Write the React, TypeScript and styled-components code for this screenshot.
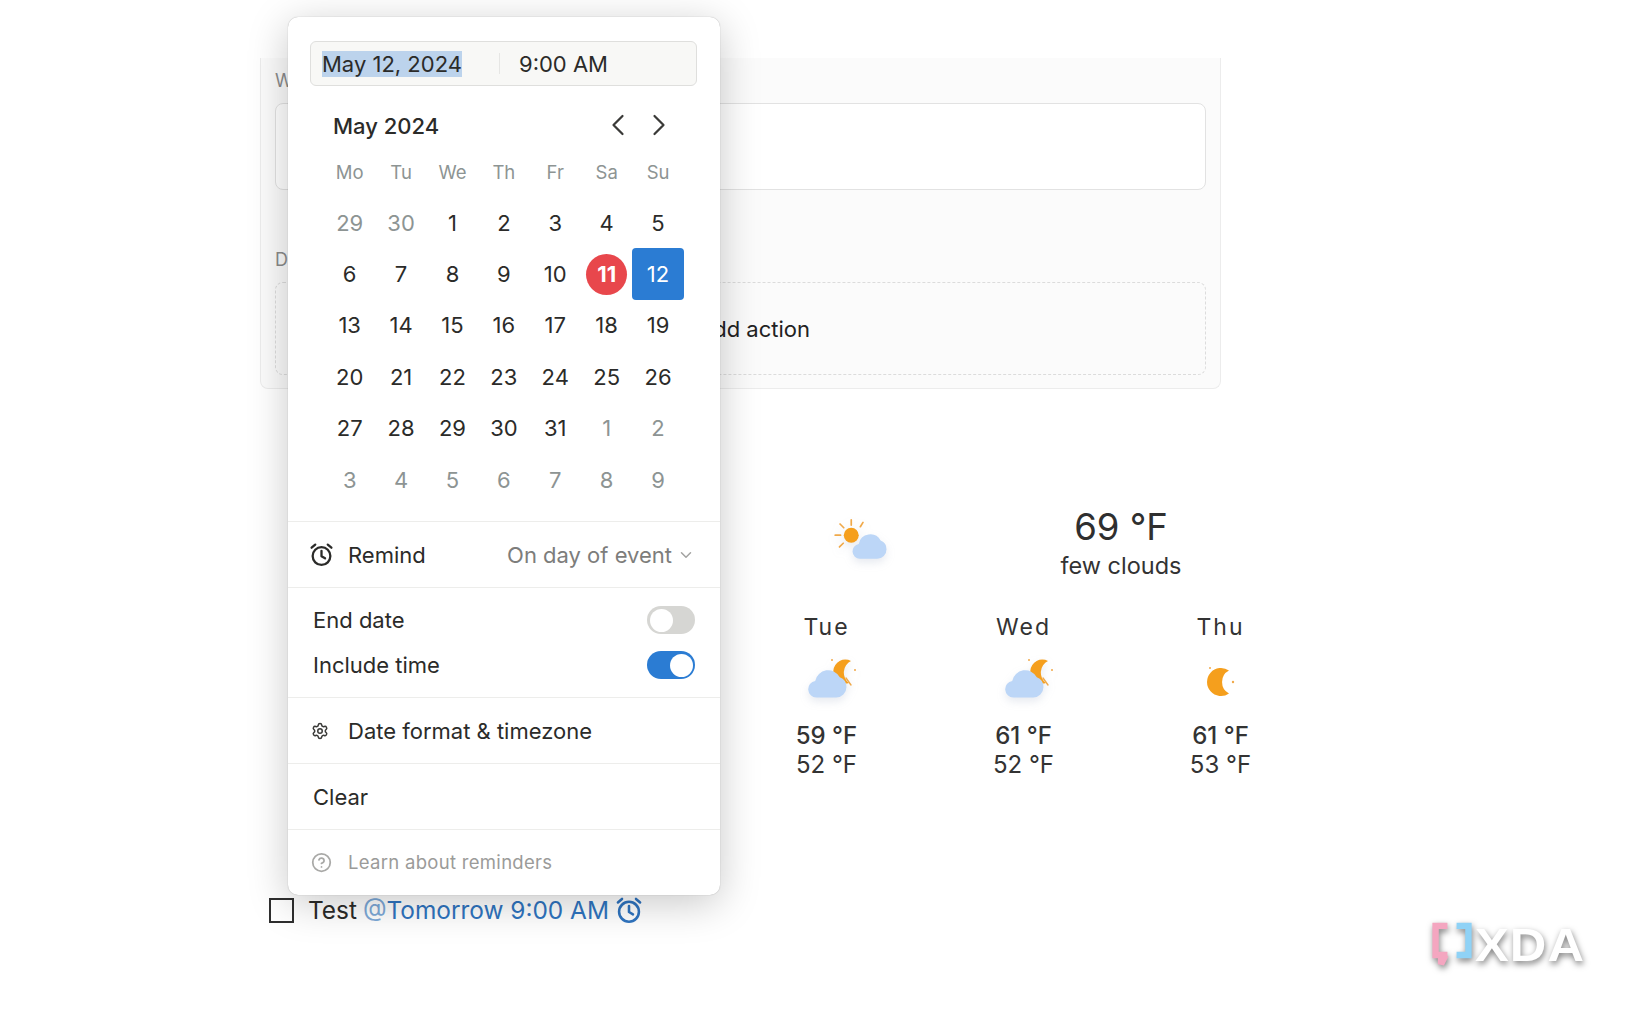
import React from 'react';
import styled, { createGlobalStyle } from 'styled-components';
import { ChevronLeft, ChevronRight, ChevronDown, Settings, CircleHelp, Plus } from 'lucide-react';

const GlobalStyle = createGlobalStyle`
  html, body { margin: 0; padding: 0; background: #fff; }
  body { font-family: Inter, "Noto Sans", sans-serif; color: #2b2b29; }
`;

const Page = styled.div`
  position: relative;
  width: 1650px;
  height: 1036px;
  overflow: hidden;
  box-sizing: border-box;
  padding: 58px 0 0 260px;
`;

/* background form, mostly hidden by the popup */
const Card = styled.section`
  box-sizing: border-box;
  width: 961px;
  height: 331px;
  padding: 12px 14px 0;
  background: #fbfbfb;
  border: 1px solid #ececec;
  border-top: none;
  border-radius: 0 0 8px 8px;
`;

const FieldLabel = styled.div`
  height: 22px;
  font-size: 18px;
  line-height: 22px;
  color: #8b8b8b;
  margin-bottom: 11px;
`;

const TextArea = styled.div`
  box-sizing: border-box;
  height: 87px;
  background: #fff;
  border: 1px solid #e2e2e2;
  border-radius: 8px;
  margin-bottom: 59px;
`;

const DropZone = styled.div`
  box-sizing: border-box;
  height: 93px;
  display: flex;
  align-items: center;
  justify-content: center;
  gap: 12px;
  padding-right: 5px;
  border: 1px dashed #dcdcdc;
  border-radius: 8px;
  font-size: 22px;
  color: #222;
`;

const Weather = styled.section`
  margin: 118px 0 0 468px;
  width: 591px;
`;

const CurrentRow = styled.div`
  display: flex;
  align-items: center;
  height: 70px;
`;

const CurrentIcon = styled.div`
  width: 60px;
  margin-left: 105px;
  margin-top: -6px;
  display: flex;
  justify-content: center;
`;

const CurrentText = styled.div`
  width: 200px;
  margin-left: 128px;
  text-align: center;
`;

const BigTemp = styled.div`
  font-size: 36.5px;
  line-height: 44px;
  margin-bottom: 3px;
  color: #2f2f2f;
`;

const Summary = styled.div`
  font-size: 23.5px;
  line-height: 28px;
  color: #333;
`;

const Forecast = styled.div`
  display: grid;
  grid-template-columns: repeat(3, 197px);
  margin-top: 36px;
`;

const Day = styled.div`
  display: flex;
  flex-direction: column;
  align-items: center;
`;

const DayName = styled.div`
  font-size: 23px;
  line-height: 28px;
  letter-spacing: 2px;
  color: #333;
`;

const DayIcon = styled.div`
  height: 54px;
  margin: 10px 0 16px;
  display: flex;
  align-items: center;
  justify-content: center;
`;

const Temp = styled.div<{ $high?: boolean }>`
  font-size: 24px;
  line-height: 29px;
  font-weight: ${p => (p.$high ? 500 : 400)};
  color: #333;
`;

const Task = styled.div`
  position: absolute;
  left: 269px;
  top: 897px;
  display: flex;
  align-items: center;
  height: 26px;
  font-size: 24.4px;
  white-space: nowrap;
`;

const Check = styled.span`
  box-sizing: border-box;
  width: 25px;
  height: 25px;
  border: 2px solid #2f2f2f;
  margin-right: 14px;
`;

const Mention = styled.span`
  margin-left: 6px;
  color: #2f74c0;
  display: inline-flex;
  align-items: center;
  gap: 6px;
`;

const At = styled.span`
  color: #7da9d8;
`;

/* date picker popup, floats above the page */
const Popup = styled.div`
  position: absolute;
  left: 288px;
  top: 17px;
  width: 432px;
  height: 878px;
  background: #fff;
  border-radius: 10px;
  box-shadow: 0 0 1px rgba(0, 0, 0, 0.35), 0 8px 40px rgba(0, 0, 0, 0.22);
  display: flex;
  flex-direction: column;
  font-size: 22px;
`;

const DateInput = styled.div`
  box-sizing: border-box;
  margin: 24px 23px 0 22px;
  height: 45px;
  display: flex;
  align-items: center;
  padding-left: 11px;
  background: #f8f8f6;
  border: 1px solid #dfdfdd;
  border-radius: 6px;
`;

const DateValue = styled.span`
  width: 177px;
  display: block;
`;

const Selected = styled.span`
  background: #bcd3ec;
`;

const InputDivider = styled.span`
  width: 1px;
  height: 21px;
  background: #e6e6e4;
  margin-right: 19px;
`;

const MonthRow = styled.div`
  display: flex;
  align-items: center;
  justify-content: space-between;
  margin: 18px 43px 5px 45px;
  height: 44px;
  font-weight: 500;
`;

const NavButtons = styled.div`
  display: flex;
  gap: 5px;
  margin-top: -3px;
  color: #3a3a38;
`;

const CalendarGrid = styled.div`
  display: grid;
  grid-template-columns: repeat(7, 51.4px);
  margin: 0 0 0 36px;
`;

const WeekDay = styled.div`
  height: 37px;
  display: flex;
  align-items: center;
  justify-content: center;
  font-size: 18.5px;
  color: #8d9493;
  margin-bottom: 7px;
`;

const DayCell = styled.div<{ $muted?: boolean; $picked?: boolean }>`
  height: 51.4px;
  display: flex;
  align-items: center;
  justify-content: center;
  font-size: 22px;
  color: ${p => (p.$picked ? '#fff' : p.$muted ? '#8d9493' : '#2b2b29')};
  background: ${p => (p.$picked ? '#2b7cd3' : 'transparent')};
  border-radius: ${p => (p.$picked ? '4px' : '0')};
`;

const TodayMark = styled.span`
  width: 41px;
  height: 41px;
  border-radius: 50%;
  background: #e8474c;
  color: #fff;
  font-weight: 700;
  display: flex;
  align-items: center;
  justify-content: center;
`;

const Section = styled.div<{ $h: number; $gap?: number }>`
  box-sizing: border-box;
  height: ${p => p.$h}px;
  margin-top: ${p => p.$gap ?? 0}px;
  border-top: 1.5px solid #ededeb;
  padding: 0 25px;
  display: flex;
  align-items: center;
`;

const ToggleSection = styled(Section)`
  flex-direction: column;
  align-items: stretch;
  justify-content: center;
`;

const IconSlot = styled.span<{ $shift?: number }>`
  width: 37px;
  margin-left: ${p => p.$shift ?? -2}px;
  display: flex;
  align-items: center;
`;

const RemindLabel = styled.span`
  margin-left: 2px;
`;

const RemindValue = styled.span`
  margin-left: auto;
  color: #7d7d7b;
  display: flex;
  align-items: center;
  gap: 5px;
`;

const ToggleRow = styled.div`
  height: 45px;
  display: flex;
  align-items: center;
  justify-content: space-between;
`;

const Toggle = styled.span<{ $on?: boolean }>`
  box-sizing: border-box;
  width: 48px;
  height: 28px;
  border-radius: 14px;
  padding: 2.5px;
  display: flex;
  justify-content: ${p => (p.$on ? 'flex-end' : 'flex-start')};
  background: ${p => (p.$on ? '#2b7cd3' : '#d6d6d3')};
`;

const Knob = styled.span`
  width: 23px;
  height: 23px;
  border-radius: 50%;
  background: #fff;
`;

const LearnText = styled.span`
  font-size: 18.5px;
  color: #9b9b99;
  letter-spacing: 0.3px;
`;

const Watermark = styled.div`
  position: absolute;
  left: 1431px;
  top: 919px;
  display: flex;
  align-items: center;
  gap: 2px;
  filter: drop-shadow(1px 3px 3px rgba(0, 0, 0, 0.5));
`;

const WatermarkText = styled.span`
  font-family: "Liberation Sans", sans-serif;
  font-size: 46px;
  line-height: 46px;
  font-weight: 700;
  color: #fff;
  letter-spacing: 1px;
  transform: scaleX(1.1);
  transform-origin: left center;
`;

const AlarmIcon: React.FC<{ size: number; color: string }> = ({ size, color }) => (
  <svg width={size} height={size} viewBox="0 0 24 24" fill="none" stroke={color} strokeWidth="2.2" strokeLinecap="round" strokeLinejoin="round">
    <circle cx="12" cy="13.5" r="8.5" />
    <path d="M12 8.5v5.2l3.4 2" />
    <path d="M2.5 5.5 6 2.5" />
    <path d="M21.5 5.5 18 2.5" />
  </svg>
);

const Cloud: React.FC<{ x: number; y: number; scale?: number }> = ({ x, y, scale = 1 }) => (
  <path
    transform={`translate(${x} ${y}) scale(${scale})`}
    d="M7 28a7 7 0 0 1-1-13.9A11 11 0 0 1 26.5 11a8.6 8.6 0 0 1 5.5 8.4a8.6 8.6 0 0 1-8.6 8.6Z"
    fill="#bcd6f7"
  />
);

const SunCloud: React.FC = () => (
  <svg width="60" height="47" viewBox="0 0 56 44" style={{ filter: 'drop-shadow(0 4px 4px rgba(120,140,170,0.18))' }}>
    <circle cx="17" cy="18" r="7" fill="#f59f1d" />
    <g stroke="#f0a94a" strokeWidth="1.6" strokeLinecap="round">
      <path d="M17 3.5v5" />
      <path d="M6.5 7.5l3.5 3.5" />
      <path d="M2 18h5" />
      <path d="M6 29l3.5-3.5" />
      <path d="M28 6l-2.5 4" />
    </g>
    <Cloud x={18} y={12} />
  </svg>
);

const MoonCloud: React.FC = () => (
  <svg width="56" height="44" viewBox="0 0 56 44" style={{ marginLeft: 14, filter: 'drop-shadow(0 4px 4px rgba(120,140,170,0.18))' }}>
    <path d="M45 5A12 12 0 1 0 43 27A13 13 0 0 1 45 5Z" fill="#f59f1d" />
    <path d="M40 22l5 7" stroke="#f0a94a" strokeWidth="1.4" strokeLinecap="round" />
    <circle cx="26" cy="4" r="1" fill="#f0a94a" />
    <circle cx="49" cy="14" r="1" fill="#f0a94a" />
    <Cloud x={2} y={8} scale={1.2} />
  </svg>
);

const Moon: React.FC = () => (
  <svg width="30" height="34" viewBox="0 0 30 34" style={{ marginTop: 8, marginLeft: 2 }}>
    <path d="M22 5.5A14 14 0 1 0 22 28.5A13 13 0 0 1 22 5.5Z" fill="#f59f1d" />
    <circle cx="3" cy="3" r="1" fill="#f0a94a" />
    <circle cx="26" cy="17" r="1.2" fill="#f0a94a" />
  </svg>
);

const XdaMark: React.FC = () => (
  <svg width="42" height="52" viewBox="0 0 46 54" fill="none">
    <path d="M18 6H5v32h6v10l5-10h2" stroke="#f4a6c0" strokeWidth="7" />
    <path d="M28 6h13v32H28" stroke="#8fd2f6" strokeWidth="7" />
  </svg>
);

type CalDay = { n: number; muted?: boolean };

const days: CalDay[] = [
  { n: 29, muted: true }, { n: 30, muted: true },
  ...Array.from({ length: 31 }, (_, i) => ({ n: i + 1 })),
  { n: 1, muted: true }, { n: 2, muted: true }, { n: 3, muted: true }, { n: 4, muted: true },
  { n: 5, muted: true }, { n: 6, muted: true }, { n: 7, muted: true }, { n: 8, muted: true }, { n: 9, muted: true },
];

const weekDays = ['Mo', 'Tu', 'We', 'Th', 'Fr', 'Sa', 'Su'];

const forecast = [
  { name: 'Tue', icon: <MoonCloud />, high: '59 °F', low: '52 °F' },
  { name: 'Wed', icon: <MoonCloud />, high: '61 °F', low: '52 °F' },
  { name: 'Thu', icon: <Moon />, high: '61 °F', low: '53 °F' },
];

const App: React.FC = () => (
  <>
    <GlobalStyle />
    <Page>
      <Card>
        <FieldLabel>Website</FieldLabel>
        <TextArea />
        <FieldLabel>Do</FieldLabel>
        <DropZone>
          <Plus size={20} />
          Add action
        </DropZone>
      </Card>

      <Weather>
        <CurrentRow>
          <CurrentIcon><SunCloud /></CurrentIcon>
          <CurrentText>
            <BigTemp>69 °F</BigTemp>
            <Summary>few clouds</Summary>
          </CurrentText>
        </CurrentRow>
        <Forecast>
          {forecast.map(d => (
            <Day key={d.name}>
              <DayName>{d.name}</DayName>
              <DayIcon>{d.icon}</DayIcon>
              <Temp $high>{d.high}</Temp>
              <Temp>{d.low}</Temp>
            </Day>
          ))}
        </Forecast>
      </Weather>

      <Task>
        <Check />
        Test
        <Mention>
          <span><At>@</At>Tomorrow 9:00 AM</span>
          <AlarmIcon size={28} color="#2f74c0" />
        </Mention>
      </Task>

      <Popup>
        <DateInput>
          <DateValue><Selected>May 12, 2024</Selected></DateValue>
          <InputDivider />
          9:00 AM
        </DateInput>
        <MonthRow>
          May 2024
          <NavButtons>
            <ChevronLeft size={36} strokeWidth={1.5} />
            <ChevronRight size={36} strokeWidth={1.5} />
          </NavButtons>
        </MonthRow>
        <CalendarGrid>
          {weekDays.map(w => <WeekDay key={w}>{w}</WeekDay>)}
          {days.map((d, i) => (
            <DayCell key={i} $muted={d.muted} $picked={!d.muted && d.n === 12}>
              {!d.muted && d.n === 11 ? <TodayMark>11</TodayMark> : d.n}
            </DayCell>
          ))}
        </CalendarGrid>
        <Section $h={66} $gap={16}>
          <IconSlot $shift={-4}><AlarmIcon size={25} color="#2b2b29" /></IconSlot>
          <RemindLabel>Remind</RemindLabel>
          <RemindValue>On day of event <ChevronDown size={18} color="#a3a3a1" /></RemindValue>
        </Section>
        <ToggleSection $h={110}>
          <ToggleRow>End date <Toggle><Knob /></Toggle></ToggleRow>
          <ToggleRow>Include time <Toggle $on><Knob /></Toggle></ToggleRow>
        </ToggleSection>
        <Section $h={66}>
          <IconSlot><Settings size={18} color="#3a3a38" /></IconSlot>
          Date format &amp; timezone
        </Section>
        <Section $h={66}>Clear</Section>
        <Section $h={65}>
          <IconSlot><CircleHelp size={21} color="#a9a9a7" /></IconSlot>
          <LearnText>Learn about reminders</LearnText>
        </Section>
      </Popup>

      <Watermark>
        <XdaMark />
        <WatermarkText>XDA</WatermarkText>
      </Watermark>
    </Page>
  </>
);

export default App;
